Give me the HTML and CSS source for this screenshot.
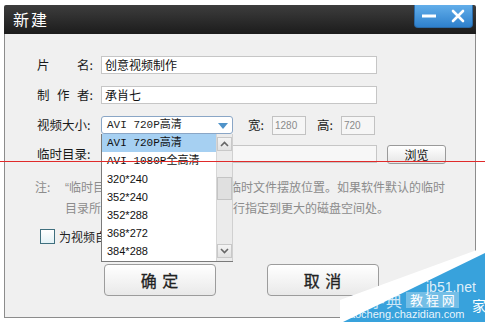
FILE: index.html
```html
<!DOCTYPE html>
<html>
<head>
<meta charset="utf-8">
<link rel="stylesheet" href="styles.css">
</head>
<body>
<div class="dialog">
  <div class="titlebar">
    <span class="title">新建</span>
    <div class="winbtns">
      <span class="wb"><svg width="16" height="6" viewBox="0 0 16 6"><rect x="1" y="1.5" width="14" height="3" fill="#fff"/></svg></span>
      <span class="wb"><svg width="14" height="14" viewBox="0 0 14 14"><path d="M2 2 L12 12 M12 2 L2 12" stroke="#fff" stroke-width="2.6" stroke-linecap="round"/></svg></span>
    </div>
  </div>
  <div class="body">
    <div class="row">
      <div class="lbl"><span>片</span><span>名:</span></div>
      <div class="field">创意视频制作</div>
    </div>
    <div class="row">
      <div class="lbl"><span>制</span><span>作</span><span>者:</span></div>
      <div class="field">承肖七</div>
    </div>
    <div class="row row3">
      <div class="lbl"><span>视频大小:</span></div>
      <div class="select">
        <span class="seltext">AVI 720P高清</span>
        <svg class="caret" width="10" height="6" viewBox="0 0 10 6"><path d="M0 0 H10 L5 6 Z" fill="#4f93c9"/></svg>
        <div class="droplist">
          <div class="opts">
            <div class="opt avi sel">AVI 720P高清</div>
            <div class="opt avi">AVI 1080P全高清</div>
            <div class="opt num">320*240</div>
            <div class="opt num">352*240</div>
            <div class="opt num">352*288</div>
            <div class="opt num">368*272</div>
            <div class="opt num">384*288</div>
          </div>
          <div class="sbar">
            <div class="sarrow up"><svg width="9" height="6" viewBox="0 0 9 6"><path d="M1 5 L4.5 1.5 L8 5" stroke="#666" stroke-width="1.6" fill="none"/></svg></div>
            <div class="thumb"></div>
            <div class="sarrow down"><svg width="9" height="6" viewBox="0 0 9 6"><path d="M1 1 L4.5 4.5 L8 1" stroke="#666" stroke-width="1.6" fill="none"/></svg></div>
          </div>
        </div>
      </div>
      <span class="wh wlbl">宽:</span>
      <div class="small">1280</div>
      <span class="wh hlbl">高:</span>
      <div class="small">720</div>
    </div>
    <div class="row">
      <div class="lbl"><span>临时目录:</span></div>
      <div class="field dis"></div>
      <div class="browse">浏览</div>
    </div>
    <div class="note">
      <span class="nk">注:</span>
      <span class="nt"><span class="q">“</span>临时目录<span class="q">”</span>是指视频制作过程中临时文件摆放位置。如果软件默认的临时<br>目录所在磁盘空间不足，请您自行指定到更大的磁盘空间处。</span>
    </div>
    <div class="check">
      <span class="box"></span>
      <span>为视频自动添加片头片尾</span>
    </div>
    <div class="btns">
      <div class="btn">确 定</div>
      <div class="btn">取 消</div>
    </div>
  </div>
</div>
<div class="redline"></div>
<div class="wm">
  <svg width="145" height="75" viewBox="0 0 145 75">
    <polygon points="0,53 145,0 145,75 0,75" fill="#ffffff"/>
    <polygon points="3,75 145,6 145,75" fill="#38a2dc"/>
  </svg>
  <span class="wm4">查字典</span>
  <span class="wm1">jb51.net</span>
  <span class="wm2">教 程 网</span>
  <span class="wm3">家</span>
  <span class="wm5">jiaocheng.chazidian.com</span>
</div>
</body>
</html>
```
FILE: styles.css
```css
* { box-sizing: border-box; }
body {
  margin: 0;
  background: #fff;
  font-family: "Noto Sans CJK SC", sans-serif;
  font-size: 12px;
  color: #222;
  width: 485px;
  height: 322px;
  overflow: hidden;
  position: relative;
}
.dialog {
  margin: 5px 0 0 4px;
  width: 472px;
  height: 313px;
  display: flex;
  flex-direction: column;
}
.titlebar {
  height: 29px;
  flex: none;
  background: linear-gradient(#3d3d3d, #1c1c1c);
  display: flex;
  align-items: flex-start;
  padding-right: 3px;
  border-radius: 2px 2px 0 0;
}
.title {
  color: #fff;
  font-size: 16px;
  line-height: 29px;
  padding-left: 9px;
  letter-spacing: 2px;
}
.winbtns {
  margin-left: auto;
  display: flex;
  height: 23px;
  width: 59px;
  background: linear-gradient(#62aeea, #2e80cc);
  border: 1px solid #2a6aa8;
  border-top: none;
  border-radius: 0 0 4px 4px;
}
.wb {
  flex: 1;
  display: flex;
  align-items: center;
  justify-content: center;
}
.body {
  flex: 1;
  background: #f0f0f0;
  border: 1px solid #8c8c8c;
  border-top: none;
  padding: 22px 0 0 32px;
  display: flex;
  flex-direction: column;
  align-items: flex-start;
}
.row {
  display: flex;
  align-items: center;
  height: 18px;
  margin-bottom: 12px;
}
.row3 { margin-bottom: 11px; }
.lbl {
  width: 56px;
  margin-right: 8px;
  display: flex;
  justify-content: space-between;
  line-height: 18px;
  color: #1a1a1a;
  font-size: 12.5px;
}
.field {
  height: 18px;
  width: 276px;
  background: #fff;
  border: 1px solid #c6c6c6;
  padding-left: 3px;
  line-height: 16px;
  color: #111;
}
.field.dis { background: #f7f7f7; }
.select {
  position: relative;
  width: 132px;
  height: 18px;
  border: 1px solid #8aa6c6;
  border-radius: 3px;
  background: #fff;
}
.seltext, .opt.avi {
  font-family: "Liberation Mono", "Noto Sans CJK SC", monospace;
  font-size: 11px;
}
.seltext {
  position: absolute;
  left: 5px;
  top: 0;
  line-height: 16px;
}
.caret {
  position: absolute;
  right: 4px;
  top: 6px;
}
.droplist {
  position: absolute;
  top: 17px;
  left: -1px;
  width: 132px;
  height: 128px;
  background: #fff;
  border-left: 1px solid #7a7a7a;
  border-bottom: 1px solid #7a7a7a;
  display: flex;
  z-index: 2;
}
.opts { flex: 1; }
.opt {
  height: 18px;
  line-height: 18px;
  padding-left: 5px;
  color: #111;
  white-space: nowrap;
}
.opt.sel { background: #a6d0f2; }
.opt.num {
  font-family: "Liberation Sans", sans-serif;
  font-size: 11px;
}
.sbar {
  width: 17px;
  background: #ebebeb;
  border-left: 1px solid #d6d6d6;
  border-right: 1px solid #d0d0d0;
  display: flex;
  flex-direction: column;
  align-items: center;
  padding-top: 3px;
}
.sarrow {
  width: 15px;
  height: 14px;
  border: 1px solid #c8c8c8;
  background: linear-gradient(#f4f4f4, #e2e2e2);
  display: flex;
  align-items: center;
  justify-content: center;
}
.thumb {
  width: 15px;
  height: 23px;
  margin-top: 26px;
  margin-bottom: 44px;
  border: 1px solid #c4c4c4;
  background: #e0e0e0;
}
.wh { line-height: 18px; color: #1a1a1a; font-size: 12.5px; }
.wlbl { margin-left: 15px; margin-right: 8px; }
.hlbl { margin-left: 11px; margin-right: 8px; }
.small {
  width: 34px;
  height: 19px;
  border: 1px solid #c2c2c2;
  background: #f6f6f6;
  font-family: "Liberation Sans", sans-serif;
  font-size: 10px;
  color: #8a8a8a;
  line-height: 17px;
  padding-left: 2px;
}
.browse {
  margin-left: 10px;
  width: 59px;
  height: 19px;
  border: 1px solid #9a9a9a;
  border-radius: 3px;
  background: linear-gradient(#ffffff, #e6e6e6);
  text-align: center;
  line-height: 17px;
  color: #111;
}
.note {
  display: flex;
  margin-top: 2px;
  margin-left: -2px;
  line-height: 20px;
  color: #8c8c8c;
  white-space: nowrap;
}
.nk { width: 30px; flex: none; }
.q { font-family: "Liberation Sans", sans-serif; }
.check {
  display: flex;
  align-items: center;
  margin-top: 10px;
  margin-left: 3px;
  height: 16px;
  color: #222;
}
.box {
  width: 15px;
  height: 15px;
  border: 1px solid #3f6f7e;
  background: linear-gradient(#ffffff, #e4f2f6);
  margin-right: 4px;
}
.btns {
  display: flex;
  gap: 51px;
  margin-top: 20px;
  margin-left: 67px;
}
.btn {
  width: 112px;
  height: 32px;
  border: 1px solid #9c9c9c;
  border-radius: 4px;
  background: linear-gradient(#ffffff, #e9e9e9);
  text-align: center;
  line-height: 30px;
  font-size: 16px;
  color: #222;
  letter-spacing: 1px;
  -webkit-text-stroke: 0.3px #222;
}
.redline {
  position: absolute;
  left: 0;
  top: 161px;
  width: 485px;
  height: 1px;
  background: #e02a2a;
  z-index: 5;
}
.wm {
  position: absolute;
  right: 0;
  bottom: 0;
  width: 145px;
  height: 75px;
  z-index: 6;
  color: #fff;
}
.wm svg { position: absolute; left: 0; top: 0; }
.wm span { position: absolute; white-space: nowrap; }
.wm1 {
  left: 86px; top: 33px;
  font-family: "Liberation Sans", sans-serif;
  font-size: 14px;
  line-height: 14px;
  color: rgba(255,255,255,0.85);
}
.wm2 {
  left: 66px; top: 45px;
  padding: 0 4px;
  font-size: 13px;
  line-height: 16px;
  background: rgba(255,255,255,0.3);
}
.wm3 { left: 132px; top: 50px; font-size: 14px; line-height: 16px; }
.wm4 {
  left: 12px; top: 44px;
  font-size: 16px;
  line-height: 18px;
  color: rgba(255,255,255,0.75);
  letter-spacing: 1px;
}
.wm5 {
  left: 4px; top: 61px;
  font-family: "Liberation Sans", sans-serif;
  font-size: 11px;
  line-height: 13px;
  color: rgba(255,255,255,0.9);
}
```
